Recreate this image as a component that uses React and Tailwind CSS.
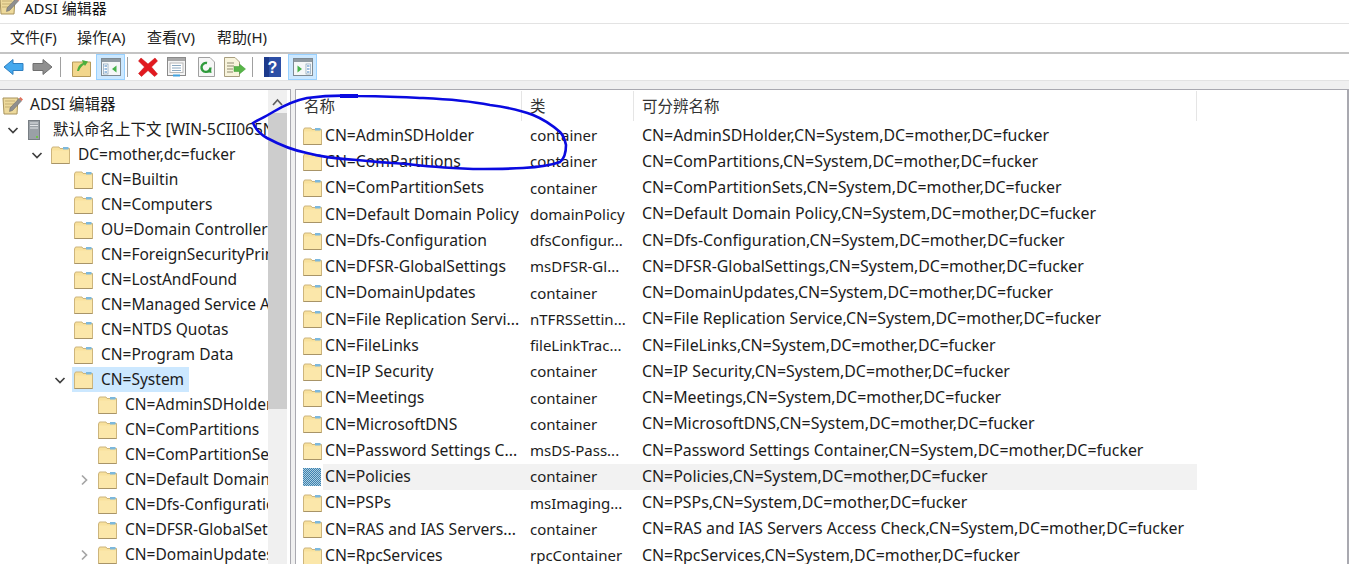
import React from "react";

const FONT = { fontFamily: '"Noto Sans", "Noto Sans CJK SC", sans-serif' };

function Folder() {
  return (
    <svg width="19" height="18" viewBox="0 0 19 18" className="shrink-0">
      <path d="M0.5 3 L1.5 1 H8 L9 2.5 H18.5 V17.5 H0.5 Z" fill="#f8e19c" stroke="#cdb57c" />
      <rect x="1" y="4.5" width="17" height="12.5" fill="#fbe7aa" />
      <rect x="12" y="1" width="5.5" height="2.5" fill="#7db8dc" />
      <path d="M0.5 17.5 H18.5" stroke="#a89468" />
    </svg>
  );
}

function Policies() {
  return (
    <svg width="18" height="18" viewBox="0 0 18 18" className="shrink-0">
      <defs>
        <pattern id="chk" width="2" height="2" patternUnits="userSpaceOnUse">
          <rect width="2" height="2" fill="#a9cfe0" />
          <rect width="1" height="1" fill="#3f80b0" />
          <rect x="1" y="1" width="1" height="1" fill="#3f80b0" />
        </pattern>
      </defs>
      <rect width="18" height="18" fill="url(#chk)" />
    </svg>
  );
}

function Chevron({ open, light }) {
  const c = light ? "#a6a6a6" : "#404040";
  return (
    <svg width="12" height="12" viewBox="0 0 12 12">
      <path d={open ? "M1.5 4 L6 8.5 L10.5 4" : "M4 1.5 L8.5 6 L4 10.5"} fill="none" stroke={c} strokeWidth="1.7" />
    </svg>
  );
}

function Snap() {
  return (
    <svg width="21" height="20" viewBox="0 0 21 20" className="shrink-0">
      <path d="M1 3 H16 L15 19 H2 Z" fill="#eeda9c" stroke="#a8935c" />
      <path d="M3 6 H13 M3 9 H12 M3 12 H10" stroke="#c4ae74" />
      <path d="M8 13 L17 3.5 L19.5 6 L10.5 15.5 L7.5 16.5 Z" fill="#8f8f8f" stroke="#666" strokeWidth="0.5" />
      <path d="M17 3.5 L18.5 2 L21 4.5 L19.5 6 Z" fill="#e0705c" />
    </svg>
  );
}

function Server() {
  return (
    <svg width="12" height="20" viewBox="0 0 12 20" className="shrink-0">
      <rect x="0.5" y="0.5" width="11" height="19" fill="#9aa0a6" stroke="#787e84" />
      <path d="M2 3 H10 M2 5.5 H10 M2 8 H10" stroke="#e3e6e9" />
      <rect x="8" y="16" width="2" height="2" fill="#6fc24a" />
    </svg>
  );
}

function Back() {
  return (
    <svg width="21" height="18" viewBox="0 0 21 18">
      <path d="M1 9 L10 1.5 V5.5 H20 V12.5 H10 V16.5 Z" fill="#45a9ee" stroke="#2f7fc0" />
    </svg>
  );
}
function Forward() {
  return (
    <svg width="21" height="18" viewBox="0 0 21 18">
      <path d="M20 9 L11 1.5 V5.5 H1 V12.5 H11 V16.5 Z" fill="#8f8f8f" stroke="#6f6f6f" />
    </svg>
  );
}
function UpFolder() {
  return (
    <svg width="19" height="20" viewBox="0 0 19 20">
      <path d="M0.5 5 H18.5 V19.5 H0.5 Z" fill="#f2d68c" stroke="#b59a5a" />
      <path d="M5 14 C6 9 8 7 11 6 L10 3 L16 4.5 L13 9 L12 7.5 C10 9 8 11 7 14 Z" fill="#4caf3c" />
    </svg>
  );
}
function Win({ side }) {
  return (
    <svg width="20" height="20" viewBox="0 0 20 20">
      <rect x="0.5" y="1.5" width="19" height="17" fill="#f5f7f8" stroke="#7f8a92" />
      <rect x="1" y="2" width="18" height="3" fill="#8f9aa2" />
      {side === "left" ? (
        <>
          <rect x="2.5" y="7" width="4.5" height="10" fill="#fff" stroke="#6f8fa8" strokeWidth="0.6" />
          <path d="M3.5 9 H6 M3.5 12 H6 M3.5 15 H6" stroke="#3f7fc0" />
          <path d="M11 12 L15.5 8.5 V15.5 Z" fill="#46b24a" />
        </>
      ) : (
        <>
          <rect x="13" y="7" width="4.5" height="10" fill="#fff" stroke="#6f8fa8" strokeWidth="0.6" />
          <path d="M14 9 H16.5 M14 12 H16.5 M14 15 H16.5" stroke="#3f7fc0" />
          <path d="M4.5 8.5 L9 12 L4.5 15.5 Z" fill="#46b24a" />
        </>
      )}
    </svg>
  );
}
function RedX() {
  return (
    <svg width="20" height="20" viewBox="0 0 20 20">
      <path d="M3 1 L10 7 L17 1 L19.5 4 L13.5 10 L19.5 17 L16.5 19.5 L10 13.5 L3.5 19.5 L0.5 16.5 L6.5 10 L0.5 4 Z" fill="#e2191f" stroke="#c41216" strokeWidth="0.5" />
    </svg>
  );
}
function Props() {
  return (
    <svg width="19" height="20" viewBox="0 0 19 20">
      <rect x="0.5" y="0.5" width="18" height="18" fill="#f4f4f4" stroke="#8a8a8a" />
      <rect x="1" y="1" width="17" height="3" fill="#a8a8a8" />
      <rect x="3" y="6" width="13" height="9.5" fill="#fff" stroke="#b8b8b8" />
      <path d="M5 8.5 H14 M5 11 H14 M5 13.5 H14" stroke="#8aa8c0" />
      <rect x="6" y="17.5" width="7" height="2" fill="#3fa2e0" />
    </svg>
  );
}
function Refresh() {
  return (
    <svg width="17" height="20" viewBox="0 0 17 20">
      <path d="M0.5 0.5 H12 L16.5 5 V19.5 H0.5 Z" fill="#f6f6f6" stroke="#a0a0a0" />
      <path d="M12.5 10.5 A4.5 4.5 0 1 1 9 6" fill="none" stroke="#2f9a3c" strokeWidth="2.4" />
      <path d="M9 15 L13.5 16 L13 11.5 Z" fill="#2f9a3c" />
    </svg>
  );
}
function Export() {
  return (
    <svg width="22" height="20" viewBox="0 0 22 20">
      <path d="M0.5 0.5 H11 L15.5 5 V19.5 H0.5 Z" fill="#f8f4dc" stroke="#a89e80" />
      <path d="M3 6 H10 M3 9 H10 M3 12 H9 M3 15 H9" stroke="#8f8a70" />
      <path d="M21.5 12 L15.5 7 V9.5 H10 V14.5 H15.5 V17 Z" fill="#58b548" stroke="#3e9a34" strokeWidth="0.5" />
    </svg>
  );
}
function Help() {
  return (
    <svg width="17" height="20" viewBox="0 0 17 20">
      <rect width="17" height="20" fill="#2d4fa6" />
      <rect width="5" height="20" fill="#1c3a8c" />
      <text x="8.5" y="16" textAnchor="middle" fontSize="16" fontWeight="700" fill="#fff" fontFamily="Liberation Sans">?</text>
    </svg>
  );
}

function Sep() {
  return <div className="w-[1px] h-[20px] bg-[#a0a0a0] shrink-0" />;
}
function Toggled({ children }) {
  return (
    <div className="w-[29px] h-[26px] bg-[#cce8ff] border border-[#99d1ff] flex items-center justify-center shrink-0">
      {children}
    </div>
  );
}

const TREE = [
  { t: "ADSI 编辑器", pl: "pl-[2px]", icon: "snap" },
  { t: "默认命名上下文 [WIN-5CII065NNNN.mother.fucker]", pl: "pl-[7px]", chev: "open", icon: "server" },
  { t: "DC=mother,dc=fucker", pl: "pl-[31px]", chev: "open", icon: "folder" },
  { t: "CN=Builtin", pl: "pl-[74px]", icon: "folder" },
  { t: "CN=Computers", pl: "pl-[74px]", icon: "folder" },
  { t: "OU=Domain Controllers", pl: "pl-[74px]", icon: "folder" },
  { t: "CN=ForeignSecurityPrincipals", pl: "pl-[74px]", icon: "folder" },
  { t: "CN=LostAndFound", pl: "pl-[74px]", icon: "folder" },
  { t: "CN=Managed Service Accounts", pl: "pl-[74px]", icon: "folder" },
  { t: "CN=NTDS Quotas", pl: "pl-[74px]", icon: "folder" },
  { t: "CN=Program Data", pl: "pl-[74px]", icon: "folder" },
  { t: "CN=System", pl: "pl-[54px]", chev: "open", icon: "folder", sel: true },
  { t: "CN=AdminSDHolder", pl: "pl-[98px]", icon: "folder" },
  { t: "CN=ComPartitions", pl: "pl-[98px]", icon: "folder" },
  { t: "CN=ComPartitionSets", pl: "pl-[98px]", icon: "folder" },
  { t: "CN=Default Domain Policy", pl: "pl-[78px]", chev: "closed", icon: "folder" },
  { t: "CN=Dfs-Configuration", pl: "pl-[98px]", icon: "folder" },
  { t: "CN=DFSR-GlobalSettings", pl: "pl-[98px]", icon: "folder" },
  { t: "CN=DomainUpdates", pl: "pl-[78px]", chev: "closed", icon: "folder" },
];

const ROWS = [
  ["CN=AdminSDHolder", "container"],
  ["CN=ComPartitions", "container"],
  ["CN=ComPartitionSets", "container"],
  ["CN=Default Domain Policy", "domainPolicy"],
  ["CN=Dfs-Configuration", "dfsConfigur..."],
  ["CN=DFSR-GlobalSettings", "msDFSR-Gl..."],
  ["CN=DomainUpdates", "container"],
  ["CN=File Replication Servi...", "nTFRSSettin...", "CN=File Replication Service"],
  ["CN=FileLinks", "fileLinkTrac..."],
  ["CN=IP Security", "container"],
  ["CN=Meetings", "container"],
  ["CN=MicrosoftDNS", "container"],
  ["CN=Password Settings C...", "msDS-Pass...", "CN=Password Settings Container"],
  ["CN=Policies", "container", null, true],
  ["CN=PSPs", "msImaging..."],
  ["CN=RAS and IAS Servers...", "container", "CN=RAS and IAS Servers Access Check"],
  ["CN=RpcServices", "rpcContainer"],
];

const SUFFIX = ",CN=System,DC=mother,DC=fucker";

function TreeRow({ item }) {
  return (
    <div className={`h-[25px] flex items-center shrink-0 ${item.pl}`}>
      {item.chev && (
        <div className="w-[20px] flex items-center justify-start shrink-0">
          <Chevron open={item.chev === "open"} light={item.chev === "closed"} />
        </div>
      )}
      <div
        className={
          item.sel
            ? "flex items-center h-[25px] bg-[#cce8ff] pl-[2px] pr-[5px] -ml-[2px]"
            : "flex items-center h-[25px]"
        }
      >
        {item.icon === "folder" && <Folder />}
        {item.icon === "server" && <div className="ml-[1px] mr-[13px] flex"><Server /></div>}
        {item.icon === "snap" && <Snap />}
        <span className={item.icon === "snap" ? "ml-[7px]" : item.icon === "server" ? "" : "ml-[8px]"}>{item.t}</span>
      </div>
    </div>
  );
}

function ListRow({ row }) {
  const [name, cls, full, hot] = row;
  return (
    <div className="h-[26.25px] flex items-center shrink-0">
      <div className="w-[27px] pl-[7px] flex items-center shrink-0">
        {hot ? <Policies /> : <Folder />}
      </div>
      <div className={`flex flex-1 h-[26.25px] items-center ${hot ? "bg-[#f2f2f2]" : ""}`}>
        <div className="w-[205px] shrink-0 pl-[2px] text-[15.7px]">{name}</div>
        <div className="w-[112px] shrink-0 pl-[2px] text-[15px]">{cls}</div>
        <div className="pl-[2px] text-[15.9px]">{(full || name) + SUFFIX}</div>
      </div>
    </div>
  );
}

export default function App() {
  return (
    <div
      style={FONT}
      className="relative w-[1349px] h-[564px] overflow-hidden bg-white text-[#1c1c1c] text-[15.5px] leading-none flex flex-col whitespace-nowrap"
    >
      {/* title */}
      <div className="h-[24px] flex items-start gap-[4px] border-b border-[#e3e3e3] shrink-0">
        <div className="-mt-[5px] -ml-[1px] flex"><Snap /></div>
        <span className="text-[15px] text-[#111] mt-[1px]">ADSI 编辑器</span>
      </div>
      {/* menu */}
      <div className="h-[30px] flex items-center pl-[10px] pb-[2px] border-b-2 border-[#c4c4c4] shrink-0 text-[15px] text-[#222]">
        <span className="w-[67px]">文件(F)</span>
        <span className="w-[70px]">操作(A)</span>
        <span className="w-[70px]">查看(V)</span>
        <span>帮助(H)</span>
      </div>
      {/* toolbar */}
      <div className="h-[27px] flex items-center pl-[3px] border-b border-[#e3e3e3] shrink-0">
        <Back />
        <div className="w-[8px]" />
        <Forward />
        <div className="w-[7px]" />
        <Sep />
        <div className="w-[11px]" />
        <UpFolder />
        <div className="w-[5px]" />
        <Toggled><Win side="left" /></Toggled>
        <div className="w-[2px]" />
        <Sep />
        <div className="w-[10px]" />
        <RedX />
        <div className="w-[9px]" />
        <Props />
        <div className="w-[12px]" />
        <Refresh />
        <div className="w-[9px]" />
        <Export />
        <div className="w-[6px]" />
        <Sep />
        <div className="w-[11px]" />
        <Help />
        <div className="w-[7px]" />
        <Toggled><Win side="right" /></Toggled>
      </div>
      {/* band */}
      <div className="h-[8px] bg-[#f0f0f0] shrink-0" />
      {/* panes */}
      <div className="flex flex-1 min-h-0 bg-[#f0f0f0]">
        <div className="w-[291px] flex shrink-0 bg-white border-t border-r border-[#a9a9b0] overflow-hidden">
          <div className="w-[268px] pt-[2px] flex flex-col overflow-hidden shrink-0">
            {TREE.map((item) => (
              <TreeRow key={item.t} item={item} />
            ))}
          </div>
          <div className="w-[19px] bg-[#f0f0f0] flex flex-col shrink-0">
            <div className="h-[23px] flex items-center justify-center shrink-0">
              <svg width="11" height="8" viewBox="0 0 11 8">
                <path d="M1 7 L5.5 2 L10 7" fill="none" stroke="#606060" strokeWidth="1.7" />
              </svg>
            </div>
            <div className="h-[296px] bg-[#cdcdcd] shrink-0" />
          </div>
        </div>
        <div className="w-[4px] shrink-0" />
        <div className="flex-1 flex flex-col bg-white border-t border-l border-r-2 border-[#a9a9b0] overflow-hidden min-w-0">
          <div className="h-[32.5px] flex shrink-0 items-center text-[#333]">
            <div className="w-[226px] h-[30px] pl-[8px] flex items-center border-r border-[#e5e5e5] shrink-0">名称</div>
            <div className="w-[112px] h-[30px] pl-[8px] flex items-center border-r border-[#e5e5e5] shrink-0">类</div>
            <div className="w-[563px] h-[30px] pl-[8px] flex items-center border-r border-[#e5e5e5] shrink-0">可分辨名称</div>
          </div>
          <div className="w-[901px] flex flex-col">
            {ROWS.map((r) => (
              <ListRow key={r[0]} row={r} />
            ))}
          </div>
        </div>
      </div>
      {/* pen annotation */}
      <svg className="absolute left-0 top-0 pointer-events-none" width="1349" height="564" viewBox="0 0 1349 564">
        <path
          d="M358 96 C340 95 322 96 307 98 C292 101 283 106 273 112 C265 117 258 120 253 123 C256 130 260 134 267 138 C280 145 292 150 307 153 C322 157 340 159 357 160 C375 162 390 163 407 164 C430 167 450 168 473 169 C490 169 508 169 523 168 C540 167 552 165 560 162 C565 158 566 152 566 145 C565 140 563 135 560 132 C552 125 543 119 533 115 C520 110 505 107 490 105 C470 101 445 99 423 98 C400 97 380 96 358 96"
          fill="none"
          stroke="#0a0ae0"
          strokeWidth="2.6"
        />
        <path d="M340 96 H358" stroke="#0a0ae0" strokeWidth="4" />
      </svg>
    </div>
  );
}
